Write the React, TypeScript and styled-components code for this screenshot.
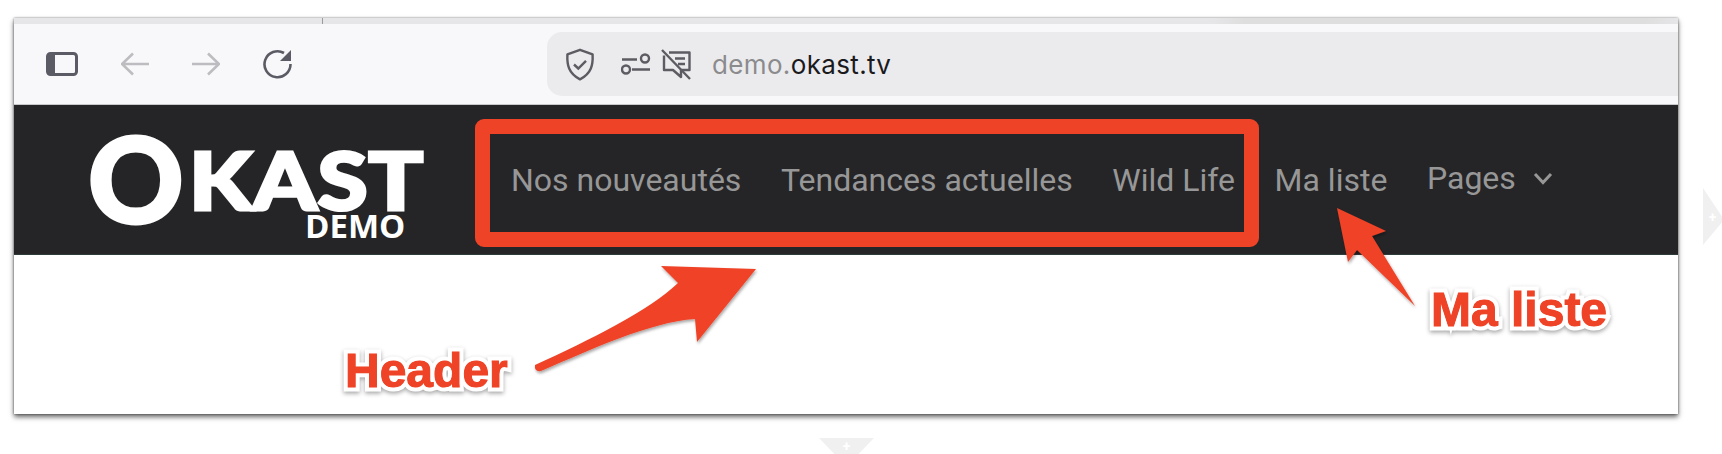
import styled, { createGlobalStyle } from "styled-components";

const GlobalStyle = createGlobalStyle`
  html, body {
    margin: 0;
    padding: 0;
    background: #ffffff;
  }
  body {
    width: 1722px;
    height: 454px;
    overflow: hidden;
    font-family: "Roboto", "Liberation Sans", sans-serif;
  }
`;

const Page = styled.div`
  position: relative;
  width: 1722px;
  height: 454px;
  padding: 18px 44px 0 14px;
  box-sizing: border-box;
  overflow: hidden;
`;

const BrowserWindow = styled.div`
  position: relative;
  height: 396px;
  display: flex;
  flex-direction: column;
  background: #ffffff;
  box-shadow: 0 3px 5px rgba(0, 0, 0, 0.6), 0 0 2px rgba(0, 0, 0, 0.45);
`;

const TabStrip = styled.div`
  height: 6px;
  flex: none;
  display: flex;
  padding-left: 308px;
  background: linear-gradient(90deg, #e6e6e8 0, #e6e6e8 72%, #dededf 74%, #dededf 98%, #e6e6e8 100%);
`;

const TabDivider = styled.span`
  width: 1px;
  height: 6px;
  background: #9b9b9e;
`;

const Toolbar = styled.div`
  height: 81px;
  flex: none;
  display: flex;
  align-items: center;
  padding: 0 0 0 32px;
  background: #f8f8fa;
  border-bottom: 1px solid #c9c9cc;
  box-sizing: border-box;
`;

const NavIcons = styled.div`
  display: flex;
  align-items: center;
  gap: 43px;
  width: 501px;
  flex: none;
`;

const AddressBar = styled.div`
  flex: 1;
  height: 64px;
  display: flex;
  align-items: center;
  padding-left: 18px;
  background: #ebebed;
  border-radius: 15px 0 0 15px;
`;

const SiteIcons = styled.div`
  display: flex;
  align-items: center;
  margin-right: 20px;
`;

const UrlText = styled.span`
  font-family: "Inter", "Liberation Sans", sans-serif;
  font-size: 26px;
  letter-spacing: 0.35px;
  color: #1a1a1e;
`;

const UrlMuted = styled.span`
  color: #8b8b8e;
`;

const SiteHeader = styled.header`
  height: 150px;
  flex: none;
  display: flex;
  align-items: center;
  padding-left: 74px;
  background: #252527;
  border-bottom: 1px solid #2f3a3c;
  box-sizing: border-box;
`;

const Logo = styled.div`
  position: relative;
  width: 423px;
  height: 110px;
  flex: none;
  display: flex;
  align-items: center;
  color: #ffffff;
  font-family: "Lato", "Liberation Sans", sans-serif;
  font-weight: 900;
  -webkit-text-stroke: 3px #ffffff;
`;

const LogoBig = styled.span`
  font-size: 118px;
  line-height: 84px;
  margin-top: -4px;
`;

const LogoSmall = styled.span`
  display: inline-block;
  font-size: 80px;
  line-height: 58px;
  letter-spacing: 0.5px;
  margin-left: 5px;
  margin-top: -1px;
  transform: scaleX(1.14);
  transform-origin: left center;
`;

const LogoTag = styled.span`
  position: absolute;
  left: 217px;
  top: 88px;
  font-family: "Open Sans", "Liberation Sans", sans-serif;
  font-size: 33px;
  font-weight: 700;
  -webkit-text-stroke: 0;
  line-height: 26px;
`;

const Nav = styled.nav`
  display: flex;
  align-items: center;
  gap: 39.6px;
  font-size: 32px;
  color: #979797;
`;

const NavLink = styled.span`
  white-space: nowrap;
`;

const PagesLink = styled.span`
  display: flex;
  align-items: center;
  gap: 17px;
  margin-top: -3px;
`;

const HighlightBox = styled.div`
  position: absolute;
  left: 461px;
  top: 101px;
  width: 784px;
  height: 128px;
  border: 15px solid #ef4327;
  border-radius: 9px;
  box-sizing: border-box;
`;

const Callout = styled.span<{ $left: number; $top: number }>`
  position: absolute;
  left: ${(p) => p.$left}px;
  top: ${(p) => p.$top}px;
  font-family: "Liberation Sans", Arial, sans-serif;
  font-size: 48px;
  font-weight: 700;
  line-height: 48px;
  white-space: nowrap;
  color: #ef4327;
  -webkit-text-stroke: 9px #ffffff;
  paint-order: stroke fill;
  filter: drop-shadow(0 2px 2px rgba(0, 0, 0, 0.35));

  &::after {
    content: attr(data-label);
    position: absolute;
    left: 0;
    top: 0;
    -webkit-text-stroke: 1px #ef4327;
  }
`;

const ArrowLayer = styled.svg`
  position: absolute;
  left: 0;
  top: 0;
  width: 1722px;
  height: 454px;
  pointer-events: none;
`;

const Handle = styled.div<{ $side: "right" | "bottom" }>`
  position: absolute;
  display: flex;
  align-items: center;
  justify-content: center;
  background: #f0f0f1;
  color: #ffffff;
  font-size: 14px;
  line-height: 14px;
  font-weight: 700;
  ${(p) =>
    p.$side === "right"
      ? `right: 0; top: 188px; width: 19px; height: 57px; clip-path: polygon(0 0, 100% 50%, 100% 60%, 0 100%);`
      : `left: 819px; top: 438px; width: 55px; height: 16px; clip-path: polygon(0 0, 100% 0, 72% 100%, 28% 100%);`}
`;

const SidebarIcon = () => (
  <svg width="32" height="24" viewBox="0 0 32 24">
    <rect x="1.5" y="1.5" width="29" height="21" rx="3" fill="none" stroke="#5b5b66" strokeWidth="3" />
    <rect x="2" y="2" width="7" height="20" fill="#5b5b66" />
  </svg>
);

const BackIcon = ({ flip }: { flip?: boolean }) => (
  <svg width="28" height="24" viewBox="0 0 28 24" style={flip ? { transform: "scaleX(-1)" } : undefined}>
    <path d="M1 12H28M12 1.500L1 12l11 10.500" fill="none" stroke="#bdbdc1" strokeWidth="2.600" />
  </svg>
);

const ReloadIcon = () => (
  <svg width="30" height="30" viewBox="0 0 30 30">
    <path d="M27.500 15A13 13 0 1 1 21 4" fill="none" stroke="#5b5b66" strokeWidth="2.600" />
    <path d="M28 1v11H17z" fill="#5b5b66" />
  </svg>
);

const ShieldIcon = () => (
  <svg width="30" height="33" viewBox="0 0 30 33">
    <path
      d="M15 1.800l12.600 4.600c.5 10.500-1 19-12.600 25-11.600-6-13.100-14.500-12.600-25z"
      fill="none"
      stroke="#5c5c62"
      strokeWidth="2.400"
      strokeLinejoin="round"
    />
    <path d="M9 16.500l4.300 4L21 12.800" fill="none" stroke="#5c5c62" strokeWidth="2.400" />
  </svg>
);

const SlidersIcon = () => (
  <svg width="30" height="22" viewBox="0 0 30 22" style={{ marginLeft: 26 }}>
    <path d="M1 6.500h15M11 16.500h18" stroke="#5c5c62" strokeWidth="2.400" fill="none" />
    <circle cx="24" cy="5.500" r="4" fill="none" stroke="#5c5c62" strokeWidth="2.400" />
    <circle cx="5" cy="16.500" r="4" fill="none" stroke="#5c5c62" strokeWidth="2.400" />
  </svg>
);

const MessageOffIcon = () => (
  <svg width="31" height="31" viewBox="0 0 31 31" style={{ marginLeft: 10 }}>
    <path
      d="M3 6.500v14.500h9l8 7V21h8.500V3.500H8"
      fill="none"
      stroke="#5c5c62"
      strokeWidth="2.400"
      strokeLinejoin="round"
    />
    <path d="M1 1l28 29M14 9.500h10M17 15h7" stroke="#5c5c62" strokeWidth="2.400" fill="none" />
  </svg>
);

const ChevronIcon = () => (
  <svg width="20" height="13" viewBox="0 0 20 13">
    <path d="M2 2l8 8.500L18 2" fill="none" stroke="#979797" strokeWidth="3" />
  </svg>
);

const links = ["Nos nouveautés", "Tendances actuelles", "Wild Life", "Ma liste"];

const App = () => {
  return (
    <>
      <GlobalStyle />
      <Page>
        <BrowserWindow>
          <TabStrip>
            <TabDivider />
          </TabStrip>
          <Toolbar>
            <NavIcons>
              <SidebarIcon />
              <BackIcon />
              <BackIcon flip />
              <ReloadIcon />
            </NavIcons>
            <AddressBar>
              <SiteIcons>
                <ShieldIcon />
                <SlidersIcon />
                <MessageOffIcon />
              </SiteIcons>
              <UrlText>
                <UrlMuted>demo.</UrlMuted>okast.tv
              </UrlText>
            </AddressBar>
          </Toolbar>
          <SiteHeader>
            <Logo>
              <LogoBig>O</LogoBig>
              <LogoSmall>KAST</LogoSmall>
              <LogoTag>DEMO</LogoTag>
            </Logo>
            <Nav>
              {links.map((label) => (
                <NavLink key={label}>{label}</NavLink>
              ))}
              <PagesLink>
                Pages
                <ChevronIcon />
              </PagesLink>
            </Nav>
          </SiteHeader>
          <HighlightBox />
          <Callout $left={331} $top={329} data-label="Header">Header</Callout>
          <Callout $left={1417} $top={268} data-label="Ma liste">Ma liste</Callout>
        </BrowserWindow>
        <ArrowLayer viewBox="0 0 1722 454">
          <defs>
            <filter id="arrowShadow" x="-10%" y="-10%" width="125%" height="125%">
              <feDropShadow dx="1" dy="2" stdDeviation="1.500" floodColor="#000000" floodOpacity="0.35" />
            </filter>
          </defs>
          <path
            d="M756 269L661 266L678 283C650 310 590 340 535 365Q534 372 541 371C590 350 650 322 695 319L697 342Z"
            fill="#ef4327"
            filter="url(#arrowShadow)"
          />
          <path
            d="M1337 208L1386 231L1372 236L1415 306L1357 250L1348 262Z"
            fill="#ef4327"
            filter="url(#arrowShadow)"
          />
        </ArrowLayer>
        <Handle $side="right">+</Handle>
        <Handle $side="bottom">+</Handle>
      </Page>
    </>
  );
};

export default App;
